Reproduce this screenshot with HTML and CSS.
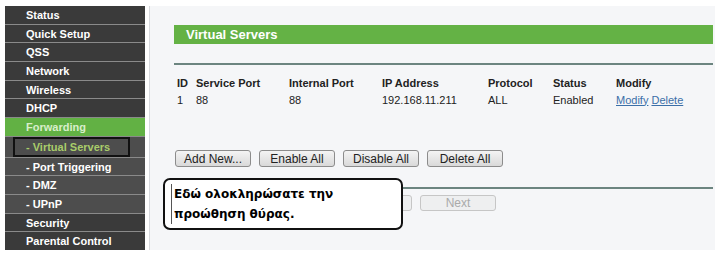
FILE: index.html
```html
<!DOCTYPE html>
<html lang="en">
<head>
    <meta charset="UTF-8">
    <title>Virtual Servers</title>
    <link rel="stylesheet" href="styles.css">
</head>
<body>
    <div class="page">
        <ul class="menu">
            <li class="menu-item">Status</li>
            <li class="menu-item">Quick Setup</li>
            <li class="menu-item">QSS</li>
            <li class="menu-item">Network</li>
            <li class="menu-item">Wireless</li>
            <li class="menu-item">DHCP</li>
            <li class="menu-item active">Forwarding</li>
            <li class="menu-item sub current"><span class="mark">- Virtual Servers</span></li>
            <li class="menu-item sub">- Port Triggering</li>
            <li class="menu-item sub">- DMZ</li>
            <li class="menu-item sub">- UPnP</li>
            <li class="menu-item">Security</li>
            <li class="menu-item">Parental Control</li>
        </ul>

        <div class="main">
            <div class="title-bar">Virtual Servers</div>
            <hr class="rule">

            <div class="table">
                <div class="row head">
                    <span>ID</span><span>Service Port</span><span>Internal Port</span><span>IP Address</span><span>Protocol</span><span>Status</span><span>Modify</span>
                </div>
                <div class="row">
                    <span>1</span><span>88</span><span>88</span><span>192.168.11.211</span><span>ALL</span><span>Enabled</span><span><a href="#">Modify</a> <a href="#">Delete</a></span>
                </div>
            </div>

            <div class="actions">
                <button class="btn">Add New...</button>
                <button class="btn">Enable All</button>
                <button class="btn">Disable All</button>
                <button class="btn">Delete All</button>
            </div>

            <hr class="rule rule-low">

            <div class="pager">
                <button class="btn off">Previous</button>
                <button class="btn off">Next</button>
            </div>
        </div>
    </div>

    <!-- Tooltip over the buttons -->
    <div class="note">
        <p>Εδώ ολοκληρώσατε την</p>
        <p>προώθηση θύρας.</p>
    </div>
</body>
</html>
```

FILE: styles.css
```css
body {
    margin: 0;
    background: #fff;
    font-family: "Liberation Sans", Arial, sans-serif;
}
.page {
    display: flex;
    padding: 6px 5px 0 5px;
}

/* Side menu */
.menu {
    list-style: none;
    margin: 0;
    padding: 0;
    width: 140px;
    height: 244px;
    display: flex;
    flex-direction: column;
    background: #3a3a3a;
}
.menu-item {
    flex: 1;
    display: flex;
    align-items: center;
    padding-left: 21px;
    color: #fff;
    font-size: 11px;
    font-weight: bold;
    border-bottom: 1px solid #8a8a8a;
}
.menu-item:last-child {
    border-bottom: none;
}
.menu-item.active {
    background: #62b144;
    color: #d8eecb;
}
.menu-item.sub {
    background: #4d4d4d;
}
.menu-item.current {
    padding-left: 8px;
}
.mark {
    display: flex;
    align-items: center;
    width: 102px;
    height: 16px;
    padding-left: 11px;
    border: 2px solid #111;
    color: #a9cc6a;
}

/* Content */
.main {
    flex: 1;
    height: 244px;
    margin-left: 4px;
    border-left: 1px solid #d6d8dc;
    background: #f5f6f8;
    padding: 19px 2px 0 24px;
    box-sizing: border-box;
}
.title-bar {
    height: 19px;
    background: #64b245;
    color: #fff;
    font-size: 13px;
    font-weight: bold;
    padding-left: 12px;
    display: flex;
    align-items: center;
}
.rule {
    margin: 19px 0 0;
    border: none;
    height: 2px;
    background: #6c8580;
}
.rule-low {
    margin-top: 20px;
}
.table {
    margin-top: 9px;
    font-size: 11px;
    color: #222;
}
.row {
    display: grid;
    grid-template-columns: 19px 93px 93px 106px 65px 63px auto;
    height: 17px;
    align-items: center;
    padding-left: 3px;
}
.row.head {
    font-weight: bold;
}
.row a {
    color: #3b6fa8;
}
.actions {
    display: flex;
    gap: 8px;
    margin-top: 42px;
    padding-left: 1px;
}
.btn {
    width: 76px;
    height: 17px;
    padding: 0;
    font-family: "Liberation Sans", Arial, sans-serif;
    font-size: 12px;
    color: #222;
    background: linear-gradient(#f4f4f4, #d9d9d9);
    border: 1px solid #8c8c8c;
    border-radius: 3px;
}
.btn.off {
    color: #aaa;
    background: #eeeff0;
    border-color: #c6c6c6;
    height: 16px;
}
.pager {
    display: flex;
    gap: 8px;
    margin-top: 6px;
    padding-left: 162px;
}

/* Tooltip */
.note {
    position: absolute;
    left: 163px;
    top: 178px;
    width: 230px;
    height: 44px;
    border: 2px solid #111;
    border-radius: 7px;
    background: #fff;
    padding: 4px 0 0 6px;
    box-sizing: content-box;
}
.note p {
    margin: 0;
    height: 20px;
    line-height: 20px;
    padding-left: 2px;
    border-left: 1px solid #555;
    font-family: "DejaVu Sans", sans-serif;
    font-size: 12px;
    font-weight: bold;
    color: #000;
}
```
